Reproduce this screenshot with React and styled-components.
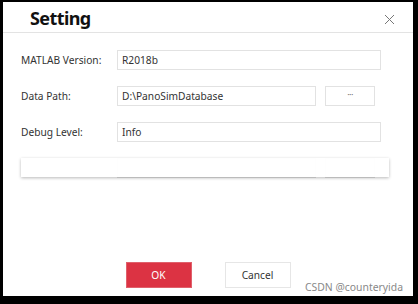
import React from "react";
import styled, { createGlobalStyle } from "styled-components";

const Global = createGlobalStyle`
  html, body { margin: 0; padding: 0; background: #000; }
  body { width: 418px; height: 304px; overflow: hidden; font-family: "Noto Sans", "Open Sans", sans-serif; }
  #root { padding: 2px 5px 8px 3px; box-sizing: border-box; height: 304px; }
`;

const Dialog = styled.div`
  position: relative;
  width: 410px;
  height: 294px;
  background: #fff;
  display: flex;
  flex-direction: column;
  box-sizing: border-box;
`;

const Header = styled.div`
  height: 30px;
  border-bottom: 1px solid #e3e3e3;
  display: flex;
  align-items: center;
  justify-content: space-between;
  padding: 0 18px 0 27px;
  flex: none;
`;

const Title = styled.div`
  font-size: 18px;
  font-weight: 700;
  color: #111;
  letter-spacing: -0.6px;
  line-height: 1;
  margin-top: 2px;
`;

const Close = styled.button`
  border: 0;
  background: none;
  padding: 0;
  width: 11px;
  height: 11px;
  display: flex;
  margin-top: 4px;
  cursor: pointer;
`;

const Form = styled.div`
  display: flex;
  flex-direction: column;
  gap: 16px;
  padding: 17px 0 0 18px;
`;

const Row = styled.div`
  position: relative;
  display: flex;
  align-items: center;
  height: 20px;
`;

const Label = styled.div`
  width: 96px;
  font-size: 10.2px;
  color: #333;
  flex: none;
`;

const Input = styled.div`
  width: ${(p) => p.$w}px;
  height: 20px;
  box-sizing: border-box;
  border: 1px solid #e2e2e2;
  font-size: 10.2px;
  color: #333;
  padding-left: 4px;
  display: flex;
  align-items: center;
  flex: none;
`;

const DotButton = styled.div`
  margin-left: 9px;
  width: 50px;
  height: 20px;
  box-sizing: border-box;
  border: 1px solid #e2e2e2;
  display: flex;
  align-items: center;
  justify-content: center;
  font-size: 9px;
  color: #777;
  letter-spacing: -0.5px;
  padding-bottom: 4px;
`;

const Popup = styled.div`
  position: absolute;
  left: 0;
  top: 0;
  width: 368px;
  height: 19px;
  background: rgba(255, 255, 255, 0.94);
  box-shadow: 0 1px 3px rgba(0, 0, 0, 0.28);
`;

const Spacer = styled.div`
  flex: 1;
`;

const Footer = styled.div`
  display: flex;
  justify-content: center;
  gap: 33px;
  padding-bottom: 8px;
`;

const Button = styled.button`
  width: 66px;
  height: 26px;
  box-sizing: border-box;
  font-family: inherit;
  font-size: 10.2px;
  border: 1px solid ${(p) => (p.$primary ? "#e0606b" : "#e6e6e6")};
  background: ${(p) => (p.$primary ? "#dc3343" : "#fff")};
  color: ${(p) => (p.$primary ? "#fff" : "#333")};
  padding: 0;
  cursor: pointer;
`;

const Watermark = styled.div`
  position: absolute;
  right: 10px;
  bottom: 2px;
  font-size: 10.4px;
  color: #888;
  font-family: "Noto Sans", sans-serif;
`;

export default function App() {
  return (
    <>
      <Global />
      <Dialog>
        <Header>
          <Title>Setting</Title>
          <Close aria-label="close">
            <svg width="11" height="11" viewBox="0 0 11 11">
              <path d="M1 1 L10 10 M10 1 L1 10" stroke="#777" strokeWidth="1" fill="none" />
            </svg>
          </Close>
        </Header>
        <Form>
          <Row>
            <Label>MATLAB Version:</Label>
            <Input $w={264}>R2018b</Input>
          </Row>
          <Row>
            <Label>Data Path:</Label>
            <Input $w={199}>D:\PanoSimDatabase</Input>
            <DotButton>···</DotButton>
          </Row>
          <Row>
            <Label>Debug Level:</Label>
            <Input $w={264}>Info</Input>
          </Row>
          <Row>
            <Label></Label>
            <Input $w={199} />
            <DotButton />
            <Popup />
          </Row>
        </Form>
        <Spacer />
        <Footer>
          <Button $primary>OK</Button>
          <Button>Cancel</Button>
        </Footer>
        <Watermark>CSDN @counteryida</Watermark>
      </Dialog>
    </>
  );
}
